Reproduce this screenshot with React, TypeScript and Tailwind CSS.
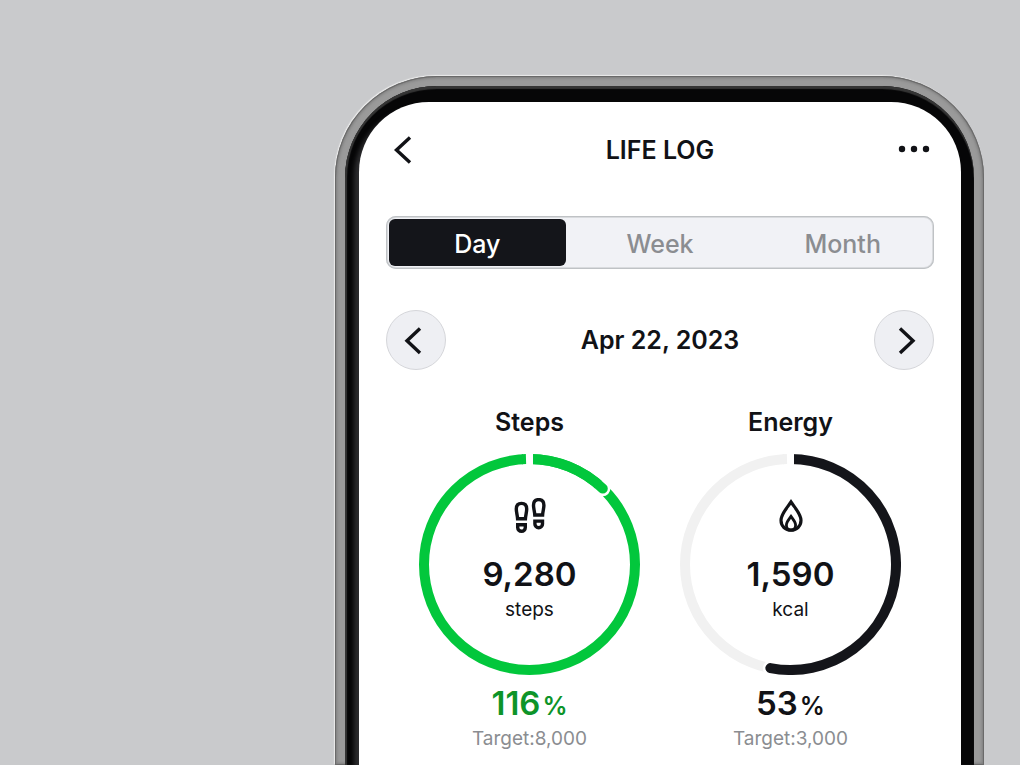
import { useState } from 'react';
import type { ReactNode } from 'react';

const TABS = ['Day', 'Week', 'Month'];

const RADIUS = 105.5;
const CENTER = 110.5;

// angle in degrees, clockwise from 12 o'clock
function pointAt(angle: number) {
  const rad = (angle * Math.PI) / 180;
  return { x: CENTER + RADIUS * Math.sin(rad), y: CENTER - RADIUS * Math.cos(rad) };
}

interface RingProps {
  color: string;
  track: string;
  endAngle: number;
}

function Ring({ color, track, endAngle }: RingProps) {
  const end = pointAt(endAngle);
  const large = endAngle > 180 ? 1 : 0;
  return (
    <svg viewBox="0 0 221 221" className="w-full" fill="none" aria-hidden="true">
      <circle cx={CENTER} cy={CENTER} r={RADIUS} stroke={track} strokeWidth="10" />
      <circle cx={end.x} cy={end.y} r="7.6" fill="#fff" />
      <path
        d={`M${CENTER} 5 A${RADIUS} ${RADIUS} 0 ${large} 1 ${end.x} ${end.y}`}
        stroke={color}
        strokeWidth="10"
        strokeLinecap="round"
      />
      {/* Gap at the top */}
      <rect x="104" y="-1" width="10" height="13" fill="#fff" />
      <path d="M103 5.26 A105.5 105.5 0 0 1 107 5.06" stroke={track} strokeWidth="10" />
    </svg>
  );
}

function FootstepsIcon() {
  return (
    <svg viewBox="0 0 36 36" className="size-9" fill="none" stroke="#111216" strokeWidth="3.4" aria-hidden="true">
      <path d="M5.6 20.8C5.4 17 4.3 14.5 4.3 11c0-3.8 2.2-5.6 5.2-5.6s5.2 1.8 5.2 5.6c0 3.5-1.1 6-1.3 9.8z" />
      <path d="M5.7 26.7h7.6v2.8a3.8 3.8 0 0 1-7.6 0z" />
      <path d="M22.8 17c-.2-3.8-1.3-6.3-1.3-9.8 0-3.8 2.2-5.6 5.2-5.6s5.2 1.8 5.2 5.6c0 3.5-1.1 6-1.3 9.8z" />
      <path d="M22.9 23.1h7.6v2.8a3.8 3.8 0 0 1-7.6 0z" />
    </svg>
  );
}

function FlameIcon() {
  return (
    <svg viewBox="0 0 36 36" className="size-9" fill="none" stroke="#111216" strokeWidth="3.2" aria-hidden="true">
      <path d="M18 4C14 10 8 16 8 22.3c0 6 4.5 9.9 10 9.9s10-3.9 10-9.9C28 16 22 10 18 4z" />
      <path d="M18 18.4c-2.2 3.1-4.6 5.6-4.6 8.6 0 3 2 5.2 4.6 5.2s4.6-2.2 4.6-5.2c0-3-2.4-5.5-4.6-8.6z" strokeWidth="2.8" />
    </svg>
  );
}

interface MetricProps {
  title: string;
  icon: ReactNode;
  value: string;
  unit: string;
  percent: number;
  target: string;
  ring: RingProps;
  percentClass: string;
}

function Metric({ title, icon, value, unit, percent, target, ring, percentClass }: MetricProps) {
  return (
    <section className="flex flex-col items-center">
      <h2 className="text-[25px] leading-8 font-semibold">{title}</h2>
      <div className="relative mt-4 w-[221px]">
        <Ring {...ring} />
        <div className="absolute inset-0 flex flex-col items-center pt-11">
          {icon}
          <p className="mt-5 text-[33px] leading-10 font-semibold">{value}</p>
          <p className="mt-0.5 text-[19px] leading-7">{unit}</p>
        </div>
      </div>
      <p className={`mt-2 flex h-10 items-baseline gap-0.5 text-[33px] leading-10 font-semibold ${percentClass}`}>
        {percent}
        <span className="text-[25px] leading-8 font-semibold">%</span>
      </p>
      <p className="mt-0.5 text-[19px] leading-7 text-[#8b8d91]">Target:{target}</p>
    </section>
  );
}

export default function App() {
  const [tab, setTab] = useState('Day');

  return (
    <main className="flex h-screen flex-col overflow-hidden bg-[#c9cacc] pt-[76px] pr-9 pl-[335px] font-['Inter',sans-serif] text-[#111216]">
      {/* Metal edge */}
      <div className="flex grow flex-col rounded-t-[102px] bg-[#9a9a9a] pt-[10px] pr-[10px] pl-[10px] shadow-[inset_0_0_0_1px_#6a6a6a,inset_0_0_3px_2px_#7c7c7c,-1px_-1px_1px_#ececec]">
        {/* Bezel */}
        <div className="flex grow flex-col rounded-t-[92px] bg-[#060607] pt-4 pr-[13px] pl-[14px] shadow-[inset_0_3px_1px_#353535,inset_2px_0_1px_#353535]">
          <div className="grow rounded-t-[70px] bg-white px-[27px] pt-6 shadow-[-5px_5px_4px_#2c2c2e]">
            <header className="flex h-12 items-center justify-between">
              <button type="button" aria-label="Back" className="w-10">
                <svg viewBox="0 0 40 32" className="w-10" fill="none" stroke="currentColor" strokeWidth="3.4" aria-hidden="true">
                  <path d="M24 3.5 10.5 16 24 28.5" />
                </svg>
              </button>
              <h1 className="text-[25px] leading-8 font-semibold">LIFE LOG</h1>
              <button type="button" aria-label="More" className="w-10">
                <svg viewBox="0 0 40 32" className="w-10" fill="currentColor" aria-hidden="true">
                  <circle cx="8" cy="15" r="3.2" />
                  <circle cx="20" cy="15" r="3.2" />
                  <circle cx="32" cy="15" r="3.2" />
                </svg>
              </button>
            </header>

            <div className="mt-[42px] grid h-[53px] grid-cols-3 rounded-[10px] bg-[#f1f2f6] shadow-[inset_0_0_0_1px_#bfc2c5,inset_0_0_0_2px_#d9dbde]">
              {TABS.map((name) => (
                <button
                  key={name}
                  type="button"
                  aria-pressed={tab === name}
                  onClick={() => setTab(name)}
                  className={`m-[3px] rounded-md pt-0.5 text-[25px] leading-8 font-medium ${
                    tab === name ? 'bg-[#14151a] text-white' : 'text-[#8b8d91]'
                  }`}
                >
                  {name}
                </button>
              ))}
            </div>

            <div className="mt-[41px] flex items-center justify-between">
              <button type="button" aria-label="Previous day" className="size-[60px] rounded-full border border-[#d5d6da] bg-[#eeeff3]">
                <svg viewBox="0 0 58 58" className="w-full" fill="none" stroke="currentColor" strokeWidth="3.4" aria-hidden="true">
                  <path d="M33 17.5 20 29.7 33 42" />
                </svg>
              </button>
              <p className="text-[25px] leading-8 font-semibold">Apr 22, 2023</p>
              <button type="button" aria-label="Next day" className="size-[60px] rounded-full border border-[#d5d6da] bg-[#eeeff3]">
                <svg viewBox="0 0 58 58" className="w-full" fill="none" stroke="currentColor" strokeWidth="3.4" aria-hidden="true">
                  <path d="M25 17.5 38 29.7 25 42" />
                </svg>
              </button>
            </div>

            <div className="mt-9 grid grid-cols-2 px-[13px]">
              <Metric
                title="Steps"
                icon={<FootstepsIcon />}
                value="9,280"
                unit="steps"
                percent={116}
                target="8,000"
                ring={{ color: '#02c73c', track: '#02c73c', endAngle: 44 }}
                percentClass="text-[#0d9429]"
              />
              <Metric
                title="Energy"
                icon={<FlameIcon />}
                value="1,590"
                unit="kcal"
                percent={53}
                target="3,000"
                ring={{ color: '#14151a', track: '#f1f1f1', endAngle: 191 }}
                percentClass="text-[#111216]"
              />
            </div>
          </div>
        </div>
      </div>
    </main>
  );
}
